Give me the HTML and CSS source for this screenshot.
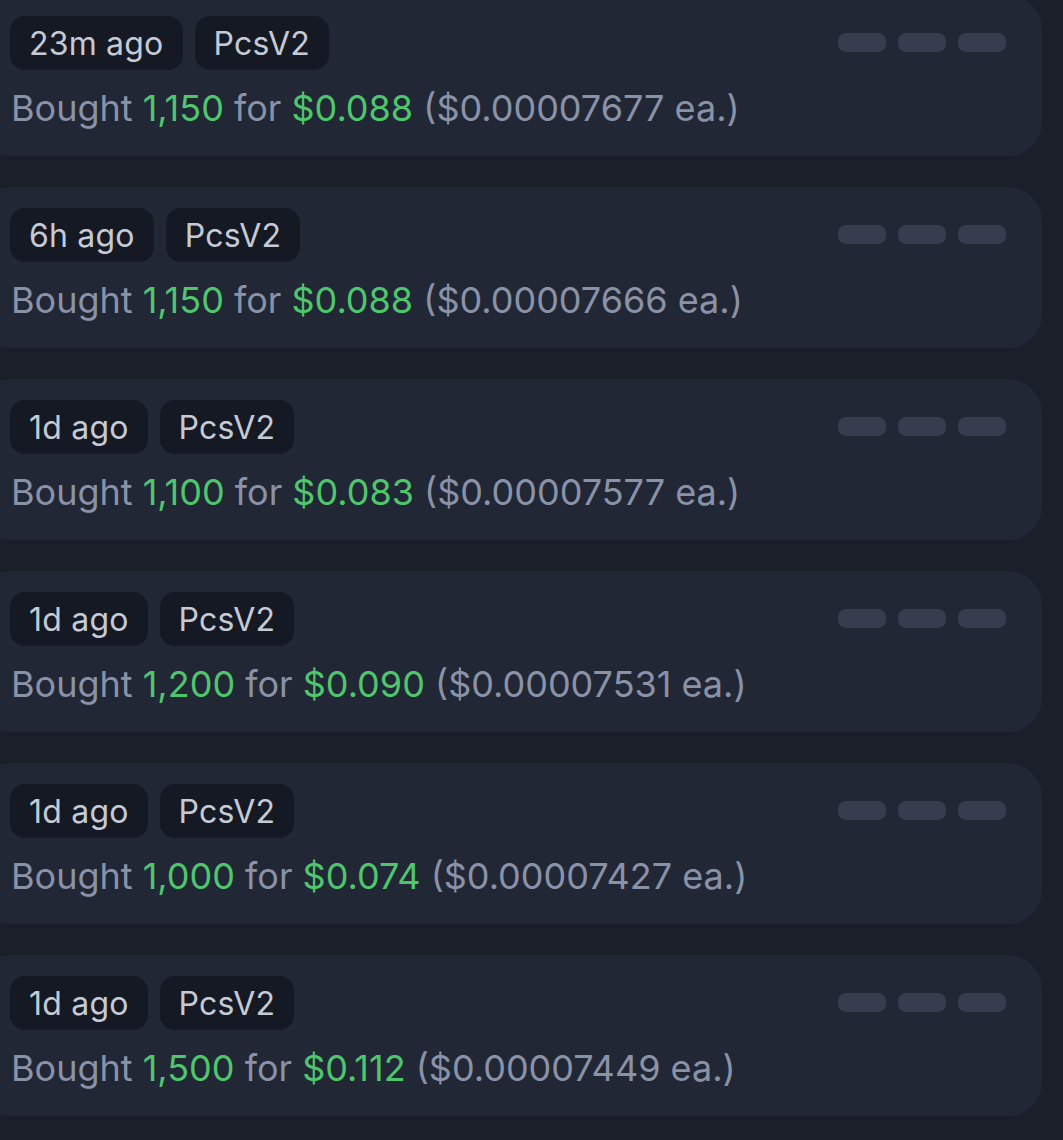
FILE: index.html
```html
<!DOCTYPE html>
<html lang="en">
<head>
    <meta charset="UTF-8">
    <meta name="viewport" content="width=device-width, initial-scale=1.0">
    <title>Trades</title>
    <link rel="stylesheet" href="styles.css">
</head>
<body>
    <div class="trade-list">
        <div class="trade">
            <div class="trade-top">
                <span class="badge">23m ago</span>
                <span class="badge">PcsV2</span>
                <div class="actions"><span></span><span></span><span></span></div>
            </div>
            <p class="trade-text">Bought <span class="green">1,150</span> for <span class="green">$0.088</span> ($0.00007677 ea.)</p>
        </div>

        <div class="trade">
            <div class="trade-top">
                <span class="badge">6h ago</span>
                <span class="badge">PcsV2</span>
                <div class="actions"><span></span><span></span><span></span></div>
            </div>
            <p class="trade-text">Bought <span class="green">1,150</span> for <span class="green">$0.088</span> ($0.00007666 ea.)</p>
        </div>

        <div class="trade">
            <div class="trade-top">
                <span class="badge">1d ago</span>
                <span class="badge">PcsV2</span>
                <div class="actions"><span></span><span></span><span></span></div>
            </div>
            <p class="trade-text">Bought <span class="green">1,100</span> for <span class="green">$0.083</span> ($0.00007577 ea.)</p>
        </div>

        <div class="trade">
            <div class="trade-top">
                <span class="badge">1d ago</span>
                <span class="badge">PcsV2</span>
                <div class="actions"><span></span><span></span><span></span></div>
            </div>
            <p class="trade-text">Bought <span class="green">1,200</span> for <span class="green">$0.090</span> ($0.00007531 ea.)</p>
        </div>

        <div class="trade">
            <div class="trade-top">
                <span class="badge">1d ago</span>
                <span class="badge">PcsV2</span>
                <div class="actions"><span></span><span></span><span></span></div>
            </div>
            <p class="trade-text">Bought <span class="green">1,000</span> for <span class="green">$0.074</span> ($0.00007427 ea.)</p>
        </div>

        <div class="trade">
            <div class="trade-top">
                <span class="badge">1d ago</span>
                <span class="badge">PcsV2</span>
                <div class="actions"><span></span><span></span><span></span></div>
            </div>
            <p class="trade-text">Bought <span class="green">1,500</span> for <span class="green">$0.112</span> ($0.00007449 ea.)</p>
        </div>
    </div>
</body>
</html>
```

FILE: styles.css
```css
body {
    font-family: Inter, "Noto Sans", sans-serif;
    margin: 0;
    background: #1a1f29;
    overflow: hidden;
}

.trade-list {
    display: flex;
    flex-direction: column;
    gap: 31px;
    width: 1066px;
    margin-top: -5px;
    margin-left: -24px;
}

.trade {
    height: 161px;
    box-sizing: border-box;
    padding: 21px 36px 0 34px;
    background: #212734;
    border-radius: 34px;
}

.trade-top {
    display: flex;
    align-items: flex-start;
    gap: 12px;
}

.badge {
    height: 54px;
    line-height: 55px;
    padding: 0 19px;
    border-radius: 15px;
    background: #141923;
    color: #c6cad5;
    font-size: 32px;
    letter-spacing: 0.2px;
}

.actions {
    margin-left: auto;
    margin-top: 17px;
    display: flex;
    gap: 12px;
}

.actions span {
    width: 48px;
    height: 19px;
    border-radius: 8px;
    background: #353d4e;
}

.trade-text {
    margin: 13px 0 0 1px;
    font-size: 36px;
    line-height: 50px;
    color: #8a92a8;
}

.green {
    color: #4fc66d;
}
```
